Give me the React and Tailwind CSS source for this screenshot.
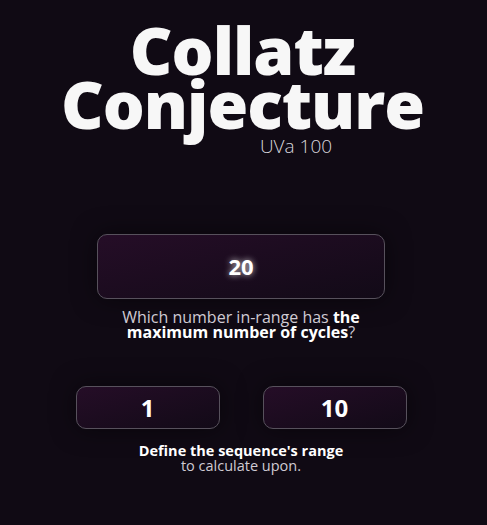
export default function App() {
  const font = { fontFamily: '"Open Sans", "DejaVu Sans", sans-serif' };
  const box =
    "rounded-[10px] border border-[#57515c] bg-gradient-to-br from-[#250d27] to-[#120a17] shadow-[0_0_24px_rgba(0,0,0,0.5)] flex items-center justify-center text-white font-bold";
  return (
    <div className="min-h-[525px] w-full bg-[#100a14] text-white flex flex-col items-center" style={font}>
      <div className="flex flex-col items-center pt-[22px] pr-[2px]">
        <h1 className="text-[66px] font-extrabold leading-[54px] tracking-[-1px] text-center text-[#f7f7f7]">
          <div>Collatz</div>
          <div>Conjecture</div>
        </h1>
        <div className="text-[19px] font-light text-[#d9d6dc] leading-[20px] pl-[107px] mt-[6px]">UVa 100</div>
      </div>

      <div className="flex flex-col items-center pr-[5px]">
        <div className={`${box} w-[288px] h-[65px] mt-[78px] text-[22px]`}>
          <span className="[text-shadow:0_0_6px_rgba(255,255,255,0.8)]">20</span>
        </div>
        <p className="mt-[11px] text-[16px] leading-[15px] text-center text-[#cfcbd3] w-[320px]">
          Which number in-range has <b className="text-white font-bold">the</b>
          <br />
          <b className="text-white font-bold">maximum number of cycles</b>?
        </p>

        <div className="flex gap-[43px] mt-[46px]">
          <div className={`${box} w-[144px] h-[43px] text-[24px]`}>1</div>
          <div className={`${box} w-[144px] h-[43px] text-[24px]`}>10</div>
        </div>
        <p className="mt-[14px] text-[14.5px] leading-[15px] text-center text-[#cfcbd3]">
          <b className="text-white font-bold">Define the sequence's range</b>
          <br />
          to calculate upon.
        </p>
      </div>
    </div>
  );
}
